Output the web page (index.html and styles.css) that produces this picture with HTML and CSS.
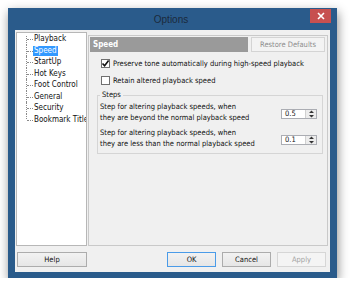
FILE: index.html
```html
<!DOCTYPE html>
<html>
<head>
<meta charset="utf-8">
<link rel="stylesheet" href="styles.css">
</head>
<body>
<div class="window">
  <div class="titlebar">
    <span class="title">Options</span>
    <span class="close"><svg width="8" height="8" viewBox="0 0 8 8"><path d="M1 1L7 7M7 1L1 7" stroke="#fff" stroke-width="1.6"/></svg></span>
  </div>
  <div class="client">
    <div class="tree">
      <ul>
        <li><span class="lbl">Playback</span></li>
        <li><span class="lbl sel">Speed</span></li>
        <li><span class="lbl">StartUp</span></li>
        <li><span class="lbl">Hot Keys</span></li>
        <li><span class="lbl">Foot Control</span></li>
        <li><span class="lbl">General</span></li>
        <li><span class="lbl">Security</span></li>
        <li><span class="lbl">Bookmark Titles</span></li>
      </ul>
    </div>
    <div class="panel">
      <div class="panel-head">
        <div class="head-title">Speed</div>
        <div class="btn restore">Restore Defaults</div>
      </div>
      <div class="panel-body">
        <div class="check-row">
          <span class="cb"><svg width="9" height="9" viewBox="0 0 9 9"><path d="M1.5 4.5L3.6 6.8L7.6 1.6" fill="none" stroke="#111" stroke-width="1.6"/></svg></span>
          <span>Preserve tone automatically during high-speed playback</span>
        </div>
        <div class="check-row">
          <span class="cb"></span>
          <span>Retain altered playback speed</span>
        </div>
        <fieldset class="group">
          <legend>Steps</legend>
          <div class="step-row">
            <div class="step-text">Step for altering playback speeds, when<br>they are beyond the normal playback speed</div>
            <div class="spin"><span class="spin-val">0.5</span><span class="spin-btns"><svg width="7" height="8" viewBox="0 0 7 8"><path d="M1 3L3.5 0.5L6 3Z M1 5L3.5 7.5L6 5Z" fill="#333"/></svg></span></div>
          </div>
          <div class="step-row">
            <div class="step-text">Step for altering playback speeds, when<br>they are less than the normal playback speed</div>
            <div class="spin"><span class="spin-val">0.1</span><span class="spin-btns"><svg width="7" height="8" viewBox="0 0 7 8"><path d="M1 3L3.5 0.5L6 3Z M1 5L3.5 7.5L6 5Z" fill="#333"/></svg></span></div>
          </div>
        </fieldset>
      </div>
    </div>
    <div class="footer">
      <div class="btn help">Help</div>
      <div class="footer-right">
        <div class="btn def">OK</div>
        <div class="btn">Cancel</div>
        <div class="btn disabled">Apply</div>
      </div>
    </div>
  </div>
</div>
</body>
</html>
```

FILE: styles.css
```css
html, body {
  margin: 0;
  padding: 0;
  background: #ffffff;
}
body {
  padding: 8px 0 0 8px;
  font-family: "DejaVu Sans Condensed", "Liberation Sans", Arial, sans-serif;
  font-size: 7.5px;
  color: #111;
}
.window {
  width: 329px;
  height: 270px;
  box-sizing: border-box;
  background: #2a5b8b;
  padding: 0 7px 6px 7px;
  box-shadow: 1px 4px 10px rgba(0,0,0,0.45);
}
.titlebar {
  position: relative;
  height: 22px;
  display: flex;
  align-items: center;
  justify-content: center;
}
.title {
  font-family: "Liberation Sans", Arial, sans-serif;
  font-size: 10px;
  color: #1b2a3c;
  margin-left: -3px;
  margin-top: 1px;
}
.close {
  position: absolute;
  right: -1px;
  top: 1px;
  width: 21px;
  height: 14px;
  background: #c75050;
  display: flex;
  align-items: center;
  justify-content: center;
}
.client {
  height: 242px;
  box-sizing: border-box;
  background: #f0f0f0;
  padding: 2px 3px 5px 1px;
  display: grid;
  grid-template-columns: 71px 240px;
  grid-template-rows: 214px 15px;
  column-gap: 1px;
  row-gap: 6px;
}
.tree {
  background: #fff;
  border: 1px solid #b7b7b7;
  box-sizing: border-box;
  overflow: hidden;
}
.tree ul {
  list-style: none;
  margin: 0;
  padding: 0 0 0 9px;
}
.tree li {
  position: relative;
  height: 11.5px;
  line-height: 11.5px;
  padding-left: 7px;
  white-space: nowrap;
  font-size: 8px;
}
.tree li::before {
  content: "";
  position: absolute;
  left: 0;
  top: 0;
  height: 100%;
  border-left: 1px dotted #8a8a8a;
}
.tree li:first-child::before {
  top: 3px;
  height: calc(100% - 3px);
}
.tree li:last-child::before {
  height: 50%;
}
.tree li::after {
  content: "";
  position: absolute;
  left: 1px;
  top: 6px;
  width: 6px;
  border-top: 1px dotted #8a8a8a;
}
.lbl {
  display: inline-block;
  padding: 0 1px;
  line-height: 10px;
}
.lbl.sel {
  background: #3399ff;
  color: #fff;
}
.panel {
  margin-top: 3px;
  border: 1px solid #c9c9c9;
  padding: 1px;
  box-sizing: border-box;
  display: flex;
  flex-direction: column;
}
.panel-head {
  display: flex;
  gap: 3px;
  height: 15px;
}
.head-title {
  width: 158px;
  background: #9a9a9a;
  color: #fff;
  font-weight: bold;
  font-size: 8px;
  line-height: 15px;
  padding-left: 3px;
  box-sizing: border-box;
}
.btn {
  box-sizing: border-box;
  border: 1px solid #acacac;
  background: linear-gradient(#f2f2f2, #e6e6e6);
  display: flex;
  align-items: center;
  justify-content: center;
  color: #111;
  height: 15px;
}
.restore {
  width: 74px;
  border-color: #d4d4d4;
  background: #f3f3f3;
  color: #8d8d8d;
}
.panel-body {
  padding: 5px 4px 0 11px;
}
.check-row {
  display: flex;
  align-items: center;
  height: 12px;
  margin-bottom: 5px;
  gap: 3px;
  white-space: nowrap;
}
.cb {
  width: 9px;
  height: 9px;
  box-sizing: border-box;
  border: 1px solid #707070;
  background: #fff;
  display: flex;
  align-items: center;
  justify-content: center;
}
.cb svg {
  flex: none;
}
.group {
  margin: -1px 0 0 -4px;
  width: 226px;
  box-sizing: border-box;
  border: 1px solid #d5d5d5;
  padding: 2px 5px 4px 2px;
}
.group legend {
  padding: 0 2px;
  line-height: 10px;
  color: #111;
}
.step-row {
  display: flex;
  align-items: center;
  justify-content: space-between;
  margin-bottom: 5px;
}
.step-row:last-child {
  margin-bottom: 0;
}
.step-text {
  line-height: 10.5px;
  white-space: nowrap;
}
.spin {
  margin-top: 2px;
  width: 36px;
  height: 10px;
  box-sizing: border-box;
  border: 1px solid #abadb3;
  background: #fff;
  display: flex;
}
.spin-val {
  flex: 1;
  line-height: 8px;
  padding-left: 3px;
}
.spin-btns {
  width: 10px;
  background: #ececec;
  border-left: 1px solid #d0d0d0;
  display: flex;
  align-items: center;
  justify-content: center;
}
.footer {
  grid-column: 1 / 3;
  display: flex;
  justify-content: space-between;
  padding-left: 1px;
}
.help {
  width: 70px;
}
.footer-right {
  display: flex;
  gap: 6px;
  padding-right: 2px;
}
.footer-right .btn {
  width: 49px;
}
.btn.def {
  border-color: #4a9be8;
}
.btn.disabled {
  border-color: #d6d6d6;
  background: #f4f4f4;
  color: #a3a3a3;
}
```
